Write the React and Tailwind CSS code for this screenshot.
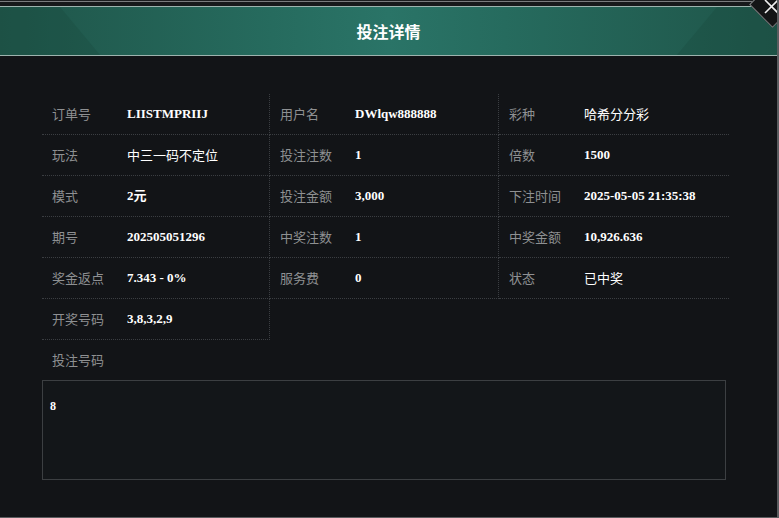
import React from 'react';

const rows = [
  [['订单号', 'LIISTMPRIIJ'], ['用户名', 'DWlqw888888'], ['彩种', '哈希分分彩', true]],
  [['玩法', '中三一码不定位', true], ['投注注数', '1'], ['倍数', '1500']],
  [['模式', '2元'], ['投注金额', '3,000'], ['下注时间', '2025-05-05 21:35:38']],
  [['期号', '202505051296'], ['中奖注数', '1'], ['中奖金额', '10,926.636']],
  [['奖金返点', '7.343 - 0%'], ['服务费', '0'], ['状态', '已中奖', true]],
];

function Cell({ label, value, cjk, last }) {
  return (
    <div
      className={`h-[41px] flex items-center border-b border-dotted border-[#3b3e42] ${
        last ? '' : 'border-r'
      }`}
    >
      <span className="w-[85px] pl-[10px] shrink-0 text-[13px] text-[#8e9092]">{label}</span>
      <span
        className={`text-[13px] text-white ${
          cjk ? 'font-normal' : 'font-bold font-["Liberation_Serif","Noto_Sans_CJK_SC",serif]'
        }`}
      >
        {value}
      </span>
    </div>
  );
}

export default function App() {
  return (
    <div className='w-[779px] h-[518px] relative overflow-hidden bg-[#121417] border-r-2 border-b border-[#5b5d60] font-["Noto_Sans_CJK_SC","Noto_Sans",sans-serif]'>
      <div className="h-[1px] bg-[#1c1e20]" />
      <div className="h-[1px] bg-[#7a7c7e]" />
      <div className="h-[4px] bg-[#17191b]" />
      <header className="relative h-[50px] border-y border-[#9db3ae] bg-[linear-gradient(90deg,#1f5549_0%,#266b5e_35%,#2a7467_50%,#266b5e_65%,#1f5549_100%)] flex items-center justify-center">
        <div className="absolute left-0 top-0 h-full w-[100px] bg-[#1b4a40]/35 [clip-path:polygon(0_0,60px_0,100px_100%,0_100%)]" />
        <div className="absolute right-0 top-0 h-full w-[100px] bg-[#1b4a40]/35 [clip-path:polygon(40px_0,100px_0,100px_100%,0_100%)]" />
        <h1 className="relative text-[16px] font-bold text-white">投注详情</h1>
      </header>
      <div className="absolute left-[756px] top-[-12px] w-[33px] h-[33px] rotate-45 bg-[#141516] border border-[#808284]" />
      <svg className="absolute left-[764px] top-[0px]" width="15" height="14" viewBox="0 0 15 14">
        <path d="M1 0 L14 13 M14 0 L1 13" stroke="#f0f0f0" strokeWidth="1.6" />
      </svg>

      <div className="pl-[42px] pt-[38px]">
        <div className="grid grid-cols-[228px_229px_230px] w-[687px]">
          {rows.map((r, i) =>
            r.map(([label, value, cjk], j) => (
              <Cell key={`${i}-${j}`} label={label} value={value} cjk={cjk} last={j === 2} />
            ))
          )}
          <Cell label="开奖号码" value="3,8,3,2,9" />
        </div>
        <div className="h-[40px] flex items-center pl-[10px] text-[13px] text-[#8e9092]">投注号码</div>
        <div className="w-[684px] h-[100px] border border-[#3c3f42] bg-[#131619] px-[7px] pt-[10px]">
          <span className='text-[12px] font-bold text-white font-["Liberation_Serif",serif]'>8</span>
        </div>
      </div>
    </div>
  );
}
